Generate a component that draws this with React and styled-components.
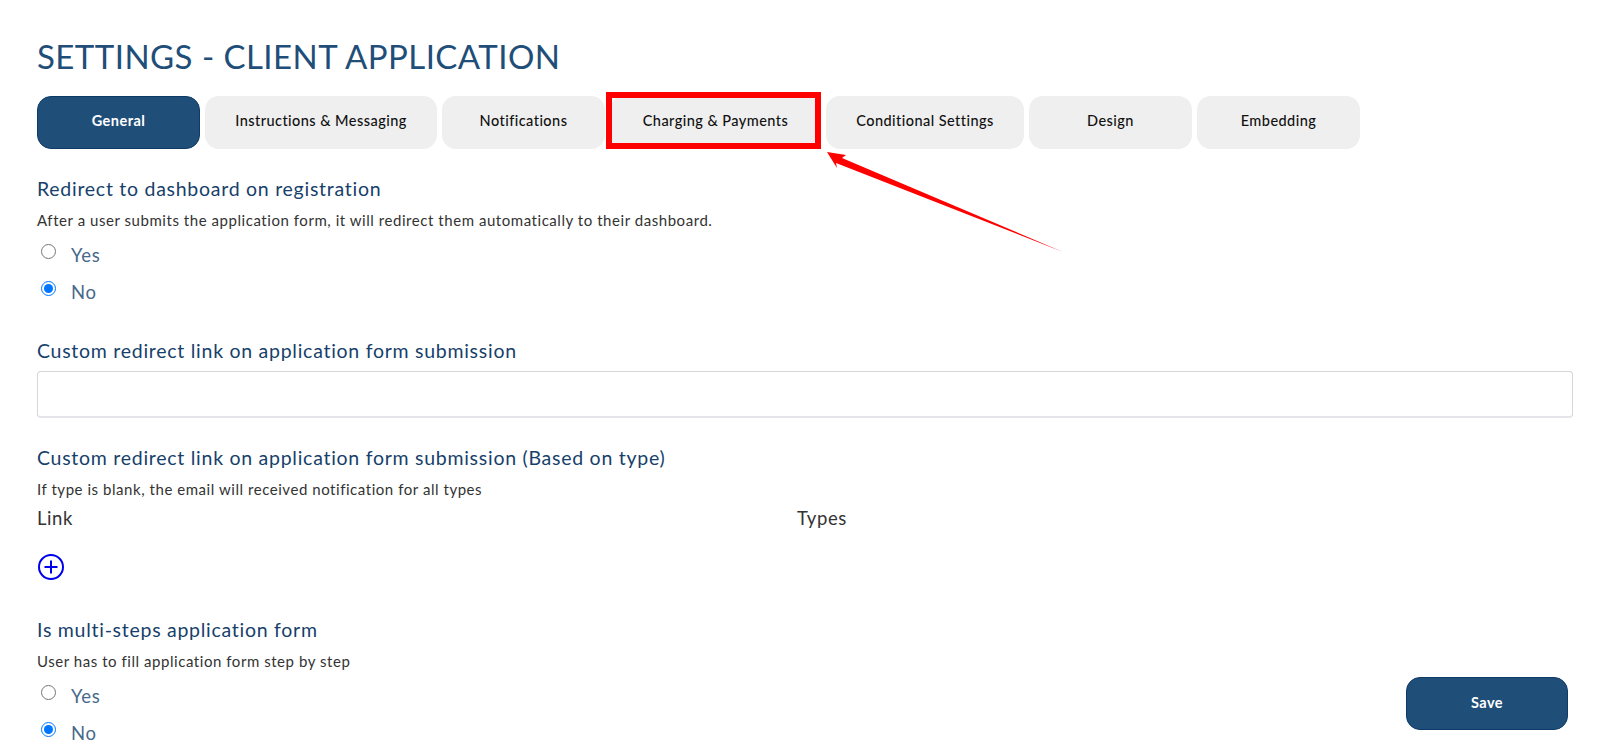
import React from 'react';
import styled, { createGlobalStyle } from 'styled-components';

const GlobalStyle = createGlobalStyle`
  html, body {
    margin: 0;
    background: #fff;
    font-family: Lato, "Noto Sans", sans-serif;
  }
`;

const Page = styled.div`
  position: relative;
  box-sizing: border-box;
  height: 748px;
  padding: 0 27px 0 37px;
  overflow: hidden;
`;

const Title = styled.h1`
  margin: 0;
  padding-top: 36px;
  height: 60px;
  font-size: 33px;
  line-height: 40px;
  font-weight: 400;
  letter-spacing: 0.45px;
  color: #1f4e79;
`;

const TabBar = styled.div`
  display: flex;
  gap: 5px;
`;

const Tab = styled.div`
  position: relative;
  box-sizing: border-box;
  display: flex;
  align-items: center;
  justify-content: center;
  width: ${(p) => p.$width}px;
  height: 53px;
  padding-bottom: 4px;
  border-radius: 14px;
  font-size: 14.5px;
  font-weight: ${(p) => (p.$active ? 700 : 500)};
  letter-spacing: 0.45px;
  color: ${(p) => (p.$active ? '#fff' : '#111')};
  background: ${(p) => (p.$active ? '#1f4e79' : '#efefef')};
  border: ${(p) => (p.$active ? '1px solid #0d3a68' : 'none')};
`;

const TabHighlight = styled.span`
  position: absolute;
  inset: -4px 0 0 -4px;
  border: 6px solid #ff0000;
`;

const Arrow = styled.svg`
  position: absolute;
  left: 820px;
  top: 145px;
`;

const Section = styled.section`
  margin-top: ${(p) => p.$top}px;
`;

const Heading = styled.h3`
  margin: 0;
  font-size: 19.5px;
  line-height: 24px;
  font-weight: 400;
  letter-spacing: 0.73px;
  color: #173f6b;
`;

const Hint = styled.p`
  margin: 9px 0 0;
  font-size: 15px;
  line-height: 20px;
  letter-spacing: 0.55px;
  color: #333;
`;

const RadioRow = styled.label`
  display: flex;
  align-items: center;
  height: 37px;
  font-size: 18.5px;
  letter-spacing: 0.7px;
  color: #47698a;

  input {
    margin: 0 15px 6px 4px;
    width: 15px;
    height: 15px;
  }
`;

const RadioGroup = styled.div`
  margin-top: 6px;
`;

const TextInput = styled.input`
  display: block;
  box-sizing: border-box;
  width: 100%;
  height: 47px;
  margin-top: 8px;
  border: 1px solid #d5d5da;
  border-bottom: 2px solid #e4e4ea;
  border-radius: 4px;
  outline: none;
`;

const ColumnHeads = styled.div`
  display: grid;
  grid-template-columns: 760px 1fr;
  margin-top: 7px;
  font-size: 18.5px;
  line-height: 24px;
  letter-spacing: 0.55px;
  color: #333;
`;

const AddButton = styled.button`
  display: block;
  margin: 23px 0 0;
  padding: 0;
  border: none;
  background: none;
  color: #0000ee;
  line-height: 0;
`;

const SaveButton = styled.button`
  position: absolute;
  right: 32px;
  top: 677px;
  width: 162px;
  height: 53px;
  padding-bottom: 4px;
  border: 1px solid #0d3a68;
  border-radius: 14px;
  background: #1f4e79;
  color: #fff;
  font-family: inherit;
  font-size: 14.5px;
  font-weight: 700;
  letter-spacing: 0.45px;
`;

const tabs = [
  { label: 'General', width: 163, active: true },
  { label: 'Instructions & Messaging', width: 232 },
  { label: 'Notifications', width: 163 },
  { label: 'Charging & Payments', width: 211, highlight: true },
  { label: 'Conditional Settings', width: 198 },
  { label: 'Design', width: 163 },
  { label: 'Embedding', width: 163 },
];

const YesNo = ({ name }) => (
  <RadioGroup>
    <RadioRow>
      <input type="radio" name={name} />
      Yes
    </RadioRow>
    <RadioRow>
      <input type="radio" name={name} defaultChecked />
      No
    </RadioRow>
  </RadioGroup>
);

const App = () => (
  <Page>
    <GlobalStyle />
    <Title>SETTINGS - CLIENT APPLICATION</Title>
    <TabBar>
      {tabs.map((tab) => (
        <Tab key={tab.label} $width={tab.width} $active={tab.active}>
          {tab.label}
          {tab.highlight && <TabHighlight />}
        </Tab>
      ))}
    </TabBar>
    <Arrow width="250" height="115" viewBox="820 145 250 115">
      <path d="M827 152 L846 155 L842 158 L1063 252 L836 163 L837 168 Z" fill="#ff0000" />
    </Arrow>

    <Section $top={28}>
      <Heading>Redirect to dashboard on registration</Heading>
      <Hint>After a user submits the application form, it will redirect them automatically to their dashboard.</Hint>
      <YesNo name="redirect" />
    </Section>

    <Section $top={29}>
      <Heading>Custom redirect link on application form submission</Heading>
      <TextInput type="text" />
    </Section>

    <Section $top={28}>
      <Heading>Custom redirect link on application form submission (Based on type)</Heading>
      <Hint>If type is blank, the email will received notification for all types</Hint>
      <ColumnHeads>
        <span>Link</span>
        <span>Types</span>
      </ColumnHeads>
      <AddButton type="button" aria-label="Add">
        <svg width="28" height="28" viewBox="0 0 28 28" fill="none" stroke="currentColor" strokeWidth="2">
          <circle cx="14" cy="14" r="12" />
          <path d="M14 7.5v13M7.5 14h13" />
        </svg>
      </AddButton>
    </Section>

    <Section $top={37}>
      <Heading>Is multi-steps application form</Heading>
      <Hint>User has to fill application form step by step</Hint>
      <YesNo name="multi" />
    </Section>

    <SaveButton type="button">Save</SaveButton>
  </Page>
);

export default App;
